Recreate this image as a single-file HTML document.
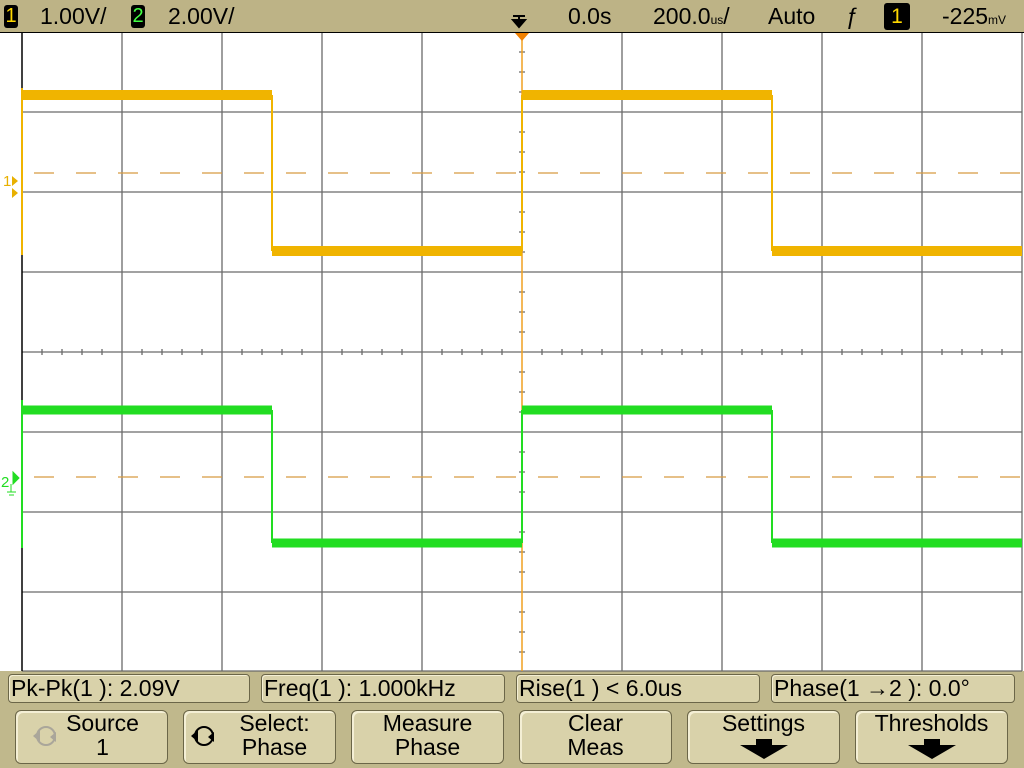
<!DOCTYPE html>
<html><head><meta charset="utf-8"><style>
body{margin:0;width:1024px;height:768px;overflow:hidden;background:#c0b88c;font-family:"Liberation Sans Narrow","Liberation Sans",sans-serif;}
.t{position:absolute;font-size:23px;color:#000;white-space:nowrap;transform-origin:0 0;}
.m{position:absolute;top:674px;height:27px;background:#d9d2aa;border:1px solid #6b6648;border-radius:4px;box-shadow:inset 1px 1px 0 #f4efd5;}
.m span{position:absolute;left:2px;top:0px;font-size:23px;white-space:nowrap;}
.b{position:absolute;top:710px;width:151px;height:52px;background:#d9d2aa;border:1px solid #6b6648;border-radius:6px;box-shadow:inset 2px 2px 0 #f4efd5;text-align:center;font-size:23px;line-height:24px;}
.ar{position:absolute;left:50%;margin-left:-32px;top:28px;}
</style></head><body>
<div style="position:absolute;left:0;top:0;width:1024px;height:32px;background:#bdb386;border-bottom:1px solid #000"></div>
<div style="position:absolute;left:4px;top:5px;width:14px;height:23px;background:#000;border-radius:3px;color:#ffd800;font-size:20px;text-align:center;line-height:23px">1</div>
<div class="t" style="left:40px;top:3px">1.00V/</div>
<div style="position:absolute;left:131px;top:5px;width:14px;height:23px;background:#000;border-radius:3px;color:#4f4;font-size:20px;text-align:center;line-height:23px">2</div>
<div class="t" style="left:168px;top:3px">2.00V/</div>
<div class="t" style="left:568px;top:3px">0.0s</div>
<div class="t" style="left:653px;top:3px">200.0<span style="font-size:12px">us</span>/</div>
<div class="t" style="left:768px;top:3px">Auto</div>
<div class="t" style="left:846px;top:3px">ƒ</div>
<div style="position:absolute;left:884px;top:3px;width:26px;height:27px;background:#000;border-radius:3px;color:#ffd800;font-size:21px;text-align:center;line-height:27px">1</div>
<div class="t" style="left:942px;top:3px">-225<span style="font-size:12px">mV</span></div>
<svg style="position:absolute;left:0;top:0" width="1024" height="768">
<path d="M513 16h12M519 16v10M513 20l6 7 6-7z" stroke="#000" stroke-width="2" fill="#000"/>
<rect x="0" y="33" width="1024" height="638" fill="#fff"/>
<g stroke="#6a6a6a" stroke-width="1.3">
<path d="M122 33v638M222 33v638M322 33v638M422 33v638M622 33v638M722 33v638M822 33v638M922 33v638M1022 33v638"/>
<path d="M22 112h1000M22 192h1000M22 272h1000M22 432h1000M22 512h1000M22 592h1000M22 671h1000M22 352h1000"/>
<path d="M42 349v6M62 349v6M82 349v6M102 349v6M142 349v6M162 349v6M182 349v6M202 349v6M242 349v6M262 349v6M282 349v6M302 349v6M342 349v6M362 349v6M382 349v6M402 349v6M442 349v6M462 349v6M482 349v6M502 349v6M542 349v6M562 349v6M582 349v6M602 349v6M642 349v6M662 349v6M682 349v6M702 349v6M742 349v6M762 349v6M782 349v6M802 349v6M842 349v6M862 349v6M882 349v6M902 349v6M942 349v6M962 349v6M982 349v6M1002 349v6"/>
<path d="M519 52h6M519 72h6M519 92h6M519 132h6M519 152h6M519 172h6M519 212h6M519 232h6M519 252h6M519 292h6M519 312h6M519 332h6M519 372h6M519 392h6M519 412h6M519 452h6M519 472h6M519 492h6M519 532h6M519 552h6M519 572h6M519 612h6M519 632h6M519 652h6"/>
</g>
<path d="M22 33v638" stroke="#000" stroke-width="1.5"/>
<path d="M522 33v638" stroke="#f0a020" stroke-width="1.5"/>
<path d="M515 33h14l-7 8z" fill="#f08000"/>
<path d="M34 173h990M34 477h990" stroke="#d89a40" stroke-width="1.3" stroke-dasharray="20 22"/>
<g fill="none" stroke="#f0b400">
<path d="M22 95h250M522 95h250M272 251h250M772 251h250" stroke-width="10"/>
<path d="M272 95v156M772 95v156M522 95v156M22 88v167" stroke-width="2"/>
</g>
<g fill="none" stroke="#22dd22">
<path d="M22 410h250M522 410h250M272 543h250M772 543h250" stroke-width="9"/>
<path d="M272 410v133M772 410v133M522 410v133M22 400v148" stroke-width="2"/>
</g>
<text x="3" y="186" fill="#e8b000" font-size="15" font-family="Liberation Sans">1</text>
<path d="M12 176l6 5-6 5zM12 188l6 5-6 5z" fill="#e8b000"/>
<text x="1" y="487" fill="#22dd22" font-size="15" font-family="Liberation Sans">2</text>
<path d="M13 472l6 6-6 6z M11 484v8M7 492h9M9 495h5" fill="#22dd22" stroke="#22dd22"/>
</svg>
<div class="m" style="left:8px;width:240px"><span>Pk-Pk(1 ): 2.09V</span></div>
<div class="m" style="left:261px;width:242px"><span>Freq(1 ): 1.000kHz</span></div>
<div class="m" style="left:516px;width:242px"><span>Rise(1 ) &lt; 6.0us</span></div>
<div class="m" style="left:771px;width:242px"><span>Phase(1 →2 ): 0.0°</span></div>
<div class="b" style="left:15px"><div style="margin-left:22px">Source<br>1</div><svg style="position:absolute;left:14px;top:12px" width="30" height="26"><circle cx="16" cy="13" r="9" fill="none" stroke="#aaa69a" stroke-width="2"/><path d="M3 13l7-6v12z M20 14l6-5v10z" fill="#aaa69a"/></svg></div>
<div class="b" style="left:183px"><div style="margin-left:30px">Select:<br>Phase</div><svg style="position:absolute;left:4px;top:12px" width="30" height="26"><circle cx="16" cy="13" r="9" fill="none" stroke="#000" stroke-width="2"/><path d="M3 13l7-6v12z M20 14l6-5v10z" fill="#000"/></svg></div>
<div class="b" style="left:351px"><div>Measure<br>Phase</div></div>
<div class="b" style="left:519px"><div>Clear<br>Meas</div></div>
<div class="b" style="left:687px"><div>Settings</div><svg class="ar" width="64" height="20"><path d="M24 0h16v6h16l-24 14-24-14h16z" fill="#000"/></svg></div>
<div class="b" style="left:855px"><div>Thresholds</div><svg class="ar" width="64" height="20"><path d="M24 0h16v6h16l-24 14-24-14h16z" fill="#000"/></svg></div>
</body></html>
